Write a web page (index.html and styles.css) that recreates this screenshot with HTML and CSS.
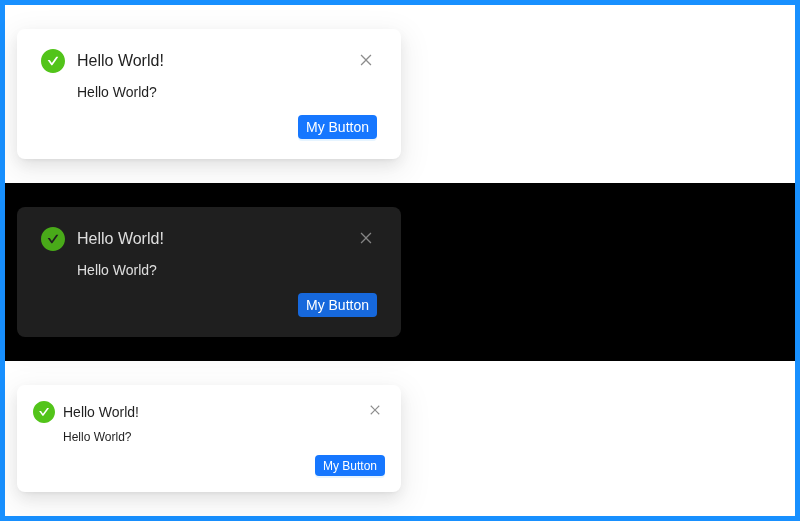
FILE: index.html
```html
<!DOCTYPE html>
<html lang="en">
<head>
<meta charset="utf-8">
<title>Notifications</title>
<link rel="stylesheet" href="styles.css">
</head>
<body>
<svg width="0" height="0" class="defs">
  <symbol id="check" viewBox="64 64 896 896"><path d="M512 64C264.600 64 64 264.600 64 512s200.600 448 448 448 448-200.600 448-448S759.400 64 512 64zm193.500 301.700l-210.600 292a31.800 31.800 0 01-51.700 0L318.500 484.900c-3.800-5.300 0-12.700 6.500-12.700h46.900c10.200 0 19.900 4.900 25.900 13.300l71.200 98.800 157.200-218c6-8.300 15.600-13.300 25.900-13.300H699c6.500 0 10.300 7.400 6.500 12.700z"/></symbol>
  <symbol id="close" viewBox="64 64 896 896"><path fill-rule="evenodd" d="M799.860 166.310c.02 0 .04.020.080.060l57.690 57.700c.04.030.050.050.060.080a.120.120 0 010 .06c0 .03-.020.050-.060.090L569.930 512l287.700 287.700c.04.040.050.060.060.090a.120.120 0 010 .07c0 .02-.020.040-.060.080l-57.700 57.690c-.03.040-.050.050-.070.060a.120.120 0 01-.070 0c-.03 0-.050-.020-.090-.060L512 569.930l-287.700 287.700c-.04.040-.060.050-.090.060a.120.120 0 01-.070 0c-.02 0-.040-.020-.080-.060l-57.690-57.700c-.04-.030-.050-.050-.060-.070a.120.120 0 010-.070c0-.03.020-.050.060-.090L454.070 512l-287.700-287.700c-.04-.040-.050-.060-.060-.090a.120.120 0 010-.070c0-.02.020-.040.060-.080l57.700-57.690c.03-.040.050-.050.070-.060a.120.120 0 01.070 0c.03 0 .05.020.090.060L512 454.070l287.700-287.700c.04-.040.060-.050.090-.060a.120.120 0 01.070 0z"/></symbol>
</svg>
<main class="frame">
  <section class="panel">
    <article class="notice">
      <svg class="status"><use href="#check"/></svg>
      <div class="content"><h2 class="title">Hello World!</h2><p class="text">Hello World?</p><button class="action">My Button</button></div>
      <span class="close"><svg class="close-icon"><use href="#close"/></svg></span>
    </article>
  </section>
  <section class="panel dark">
    <article class="notice">
      <svg class="status"><use href="#check"/></svg>
      <div class="content"><h2 class="title">Hello World!</h2><p class="text">Hello World?</p><button class="action">My Button</button></div>
      <span class="close"><svg class="close-icon"><use href="#close"/></svg></span>
    </article>
  </section>
  <section class="panel compact">
    <article class="notice">
      <svg class="status"><use href="#check"/></svg>
      <div class="content"><h2 class="title">Hello World!</h2><p class="text">Hello World?</p><button class="action">My Button</button></div>
      <span class="close"><svg class="close-icon"><use href="#close"/></svg></span>
    </article>
  </section>
</main>
</body>
</html>
```
FILE: styles.css
```css
* { box-sizing: border-box; }
body { margin: 0; font-family: "Liberation Sans", Arial, sans-serif; font-size: 14px; }
.defs { display: none; }
.frame { height: 521px; border: 5px solid #1890ff; background: #fff; }
.panel { height: 178px; padding: 24px 12px; color: rgba(0, 0, 0, 0.88); }
.notice {
  position: relative;
  display: flex;
  gap: 12px;
  width: 384px;
  height: 130px;
  padding: 20px 24px;
  border-radius: 8px;
  background: #fff;
  box-shadow: 0 6px 16px 0 rgba(0, 0, 0, 0.08), 0 3px 6px -4px rgba(0, 0, 0, 0.12), 0 9px 28px 8px rgba(0, 0, 0, 0.05);
  will-change: transform;
}
.status { flex: none; width: 24px; height: 24px; fill: #52c41a; }
.content { flex: 1; display: flex; flex-direction: column; }
.title { margin: 0 0 8px; font-size: 16px; line-height: 24px; font-weight: 400; }
.text { margin: 0; line-height: 22px; }
.action {
  align-self: flex-end;
  height: 24px;
  margin-top: 12px;
  padding: 0 8px;
  border: 0;
  border-radius: 4px;
  background: #1677ff;
  box-shadow: 0 2px 0 rgba(5, 145, 255, 0.1);
  color: #fff;
  font: 14px/22px "Liberation Sans", Arial, sans-serif;
}
.close { position: absolute; top: 20px; right: 24px; width: 22px; height: 22px; display: flex; align-items: center; justify-content: center; }
.close-icon { width: 14px; height: 14px; fill: rgba(0, 0, 0, 0.45); }
.dark { background: #000; color: rgba(255, 255, 255, 0.85); }
.dark .notice { background: #1f1f1f; }
.dark .status { fill: #49aa19; }
.dark .action { background: #1668dc; box-shadow: none; }
.dark .close-icon { fill: rgba(255, 255, 255, 0.45); }
.compact { height: 155px; }
.compact .notice { gap: 8px; height: 107px; padding: 16px; }
.compact .status { width: 22px; height: 22px; }
.compact .title { margin-bottom: 4px; font-size: 14px; line-height: 22px; }
.compact .text { font-size: 12px; line-height: 20px; }
.compact .action { height: 21px; margin-top: 8px; font-size: 12px; line-height: 20px; }
.compact .close { top: 15px; right: 16px; width: 20px; height: 20px; }
.compact .close-icon { width: 12px; height: 12px; }
```
